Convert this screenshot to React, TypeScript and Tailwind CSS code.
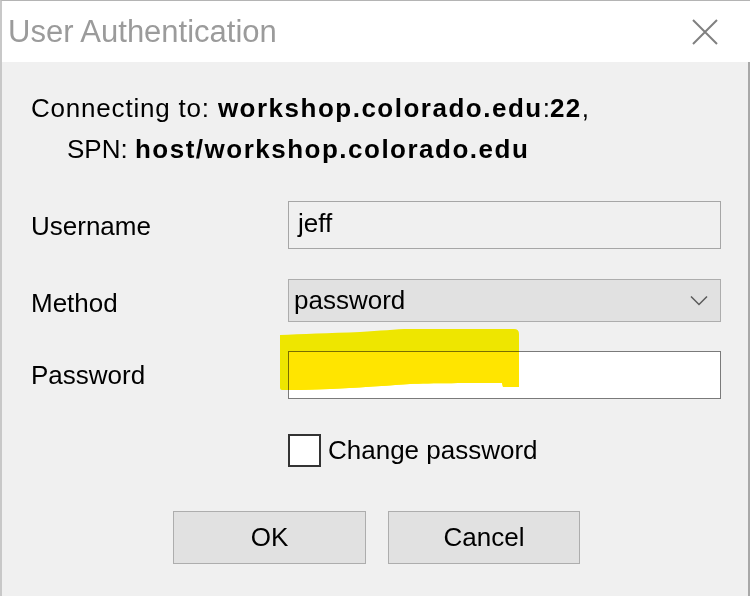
function CloseIcon() {
  return (
    <svg width="26" height="26" viewBox="0 0 26 26" fill="none">
      <path d="M1 1 L25 25 M25 1 L1 25" stroke="#808080" strokeWidth="2" />
    </svg>
  );
}

function Chevron() {
  return (
    <svg width="18" height="11" viewBox="0 0 18 11" fill="none">
      <path d="M1 1.5 L9 9.5 L17 1.5" stroke="#5a5a5a" strokeWidth="1.5" />
    </svg>
  );
}

function Highlight() {
  const shape =
    'M280 335 C300 334 330 333 360 332 C380 331 395 329 410 329 L514 329 Q519 329 519 334 L519 387 L503 387 L502 383 C470 383 430 383 410 384 C380 386 340 389 300 390 L282 390 Q280 390 280 388 Z';
  return (
    <svg
      className="absolute top-0 left-0 pointer-events-none mix-blend-multiply"
      width="750"
      height="596"
      viewBox="0 0 750 596"
    >
      <defs>
        <clipPath id="inbox">
          <rect x="288" y="351" width="433" height="48" />
        </clipPath>
      </defs>
      <path d={shape} fill="#fdf500" />
      <path d={shape} fill="#ffe500" clipPath="url(#inbox)" />
    </svg>
  );
}

export default function App() {
  return (
    <div className="relative w-[750px] h-[596px] overflow-hidden flex flex-col bg-[#f0f0f0] text-black font-['Liberation_Sans',Arial,sans-serif] text-[26px]">
      {/* title bar */}
      <div className="h-[62px] shrink-0 bg-white border-t border-t-[#b4b4b4] border-l-2 border-l-[#c8c8c8] flex items-center justify-between pl-[6px] pr-[32px]">
        <span className="text-[31px] text-[#9b9b9b] leading-none">User Authentication</span>
        <CloseIcon />
      </div>

      {/* body */}
      <div className="flex-1 border-l-2 border-l-[#c8c8c8] border-r-2 border-r-[#a8a8a8] pl-[29px] pr-[27px] pt-[26px]">
        <div className="leading-[41px]">
          <div>
            <span className="tracking-[0.8px]">Connecting to: </span>
            <b className="tracking-[1.5px]">workshop.colorado.edu</b>
            <span>:</span>
            <b className="tracking-[1.5px]">22</b>
            <span>,</span>
          </div>
          <div className="pl-[36px]">
            <span>SPN: </span>
            <b className="tracking-[1.5px]">host/workshop.colorado.edu</b>
          </div>
        </div>

        <div className="grid grid-cols-[257px_1fr] items-center h-[48px] mt-[31px]">
          <span className="pt-[2px]">Username</span>
          <div className="h-[48px] border border-[#a6a6a6] bg-[#f0f0f0] flex items-center pl-[9px] pb-[4px]">
            jeff
          </div>
        </div>

        <div className="grid grid-cols-[257px_1fr] items-center h-[43px] mt-[29px]">
          <span className="pt-[6px]">Method</span>
          <div className="h-[43px] border border-[#adadad] bg-[#e1e1e1] flex items-center justify-between pl-[5px] pr-[12px]">
            <span>password</span>
            <Chevron />
          </div>
        </div>

        <div className="grid grid-cols-[257px_1fr] items-center h-[48px] mt-[30px]">
          <span>Password</span>
          <div className="h-[48px] border border-[#7a7a7a] bg-white" />
        </div>

        <div className="grid grid-cols-[257px_1fr] items-center h-[33px] mt-[32px]">
          <span />
          <label className="flex items-center gap-[7px]">
            <span className="w-[33px] h-[33px] border-2 border-[#333333] bg-white" />
            <span>Change password</span>
          </label>
        </div>

        <div className="flex gap-[22px] mt-[47px] pl-[142px]">
          <button className="w-[193px] h-[53px] border border-[#adadad] bg-[#e1e1e1]">OK</button>
          <button className="w-[192px] h-[53px] border border-[#adadad] bg-[#e1e1e1]">Cancel</button>
        </div>
      </div>

      <Highlight />
    </div>
  );
}
